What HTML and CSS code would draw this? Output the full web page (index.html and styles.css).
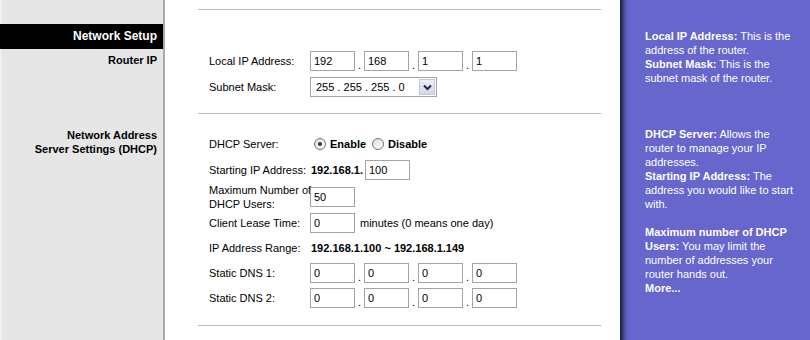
FILE: index.html
```html
<html>
<head>
<title>Setup - Basic Setup</title>
<link rel="stylesheet" href="styles.css">
</head>
<body>

<div class="page">
  <div class="nav">
    <div class="nav-title">Network Setup</div>
    <div class="nav-item router">Router IP</div>
    <div class="nav-item dhcp">Network Address<br>Server Settings (DHCP)</div>
  </div>

  <div class="main">
    <div class="rule"></div>

    <div class="section section-ip">
      <div class="row">
        <label>Local IP Address:</label>
        <input class="box" value="192"><span class="dot">.</span><input class="box" value="168"><span class="dot">.</span><input class="box" value="1"><span class="dot">.</span><input class="box" value="1">
      </div>
      <div class="row gap6">
        <label>Subnet Mask:</label>
        <div class="select">
          <span class="select-text">255 . 255 . 255 . 0</span>
          <span class="select-arrow">
            <svg width="9" height="7" viewBox="0 0 9 7"><path d="M1 1.5 L4.5 5 L8 1.5" fill="none" stroke="#23234f" stroke-width="2"/></svg>
          </span>
        </div>
      </div>
    </div>

    <div class="rule"></div>

    <div class="section section-dhcp">
      <div class="row">
        <label>DHCP Server:</label>
        <span class="radio checked"></span><span class="radio-label">Enable</span>
        <span class="radio"></span><span class="radio-label">Disable</span>
      </div>
      <div class="row gap6">
        <label>Starting IP Address:</label>
        <span class="prefix">192.168.1.</span><input class="box" value="100">
      </div>
      <div class="row gap7">
        <label class="two-line">Maximum Number of<br>DHCP Users:</label>
        <input class="box" value="50">
      </div>
      <div class="row gap6">
        <label>Client Lease Time:</label>
        <input class="box" value="0"><span class="note">minutes (0 means one day)</span>
      </div>
      <div class="row gap5">
        <label>IP Address Range:</label>
        <span class="range">192.168.1.100 ~ 192.168.1.149</span>
      </div>
      <div class="row gap5">
        <label>Static DNS 1:</label>
        <input class="box" value="0"><span class="dot">.</span><input class="box" value="0"><span class="dot">.</span><input class="box" value="0"><span class="dot">.</span><input class="box" value="0">
      </div>
      <div class="row gap5">
        <label>Static DNS 2:</label>
        <input class="box" value="0"><span class="dot">.</span><input class="box" value="0"><span class="dot">.</span><input class="box" value="0"><span class="dot">.</span><input class="box" value="0">
      </div>
    </div>

    <div class="rule"></div>
  </div>

  <div class="help">
    <b>Local IP Address:</b> This is the address of the router.<br>
    <b>Subnet Mask:</b> This is the subnet mask of the router.<br>
    <br><br><br>
    <b>DHCP Server:</b> Allows the router to manage your IP addresses.<br>
    <b>Starting IP Address:</b> The address you would like to start with.<br>
    <br>
    <b>Maximum number of DHCP Users:</b> You may limit the number of addresses your router hands out.<br>
    <b>More...</b><br>
    <br><br><br>
    <b>Time Setting:</b> Choose the time zone you are in.
  </div>
</div>

</body>
</html>
```

FILE: styles.css
```css
body {
  margin: 0;
  font-family: "Liberation Sans", Arial, sans-serif;
  font-size: 11px;
  color: #000;
}

.page {
  display: flex;
  height: 340px;
  overflow: hidden;
}

/* left menu */
.nav {
  width: 163px;
  flex: none;
  padding-top: 24px;
  background: #e6e6e6;
  border-right: 2px solid #a9a9a9;
  box-shadow: inset 2px 0 0 #f1f1f1;
}

.nav-title {
  height: 25px;
  line-height: 25px;
  padding-right: 6px;
  text-align: right;
  background: #000;
  color: #fff;
  font-size: 12px;
  font-weight: bold;
}

.nav-item {
  padding-right: 6px;
  text-align: right;
  font-weight: bold;
  line-height: 14px;
}

.router { margin-top: 4px; }
.dhcp { margin-top: 61px; }

/* form area */
.main {
  width: 455px;
  flex: none;
  box-sizing: border-box;
  padding: 9px 19px 0 33px;
  background: #fff;
}

.rule {
  height: 1px;
  background: #b9b6c9;
}

.section-ip { padding: 41px 0 16px 11px; }
.section-dhcp { padding: 20px 0 17px 11px; }

.row {
  display: flex;
  align-items: center;
  height: 20px;
}

.gap5 { margin-top: 5px; }
.gap6 { margin-top: 6px; }
.gap7 { margin-top: 7px; }

.row label {
  width: 101px;
  flex: none;
  white-space: nowrap;
}

.row label.two-line { line-height: 14px; }

.box {
  width: 45px;
  height: 20px;
  box-sizing: border-box;
  margin: 0;
  padding: 0 3px;
  border: 1px solid #a3a3a3;
  font-family: "Liberation Sans", Arial, sans-serif;
  font-size: 11px;
  color: #000;
  background: #fff;
}

.dot {
  width: 9px;
  align-self: flex-end;
  line-height: 12px;
  text-align: center;
}

.select {
  display: flex;
  align-items: center;
  width: 127px;
  height: 20px;
  box-sizing: border-box;
  border: 1px solid #a3a3a3;
  padding: 1px;
}

.select-text {
  flex: 1;
  padding-left: 4px;
}

.select-arrow {
  display: flex;
  align-items: center;
  justify-content: center;
  width: 16px;
  height: 16px;
  box-sizing: border-box;
  border: 1px solid #c3c6d3;
  background: linear-gradient(#eceef4, #d5d8e2);
}

.radio {
  width: 12px;
  height: 12px;
  box-sizing: border-box;
  margin-left: 4px;
  border: 1px solid #6f7377;
  border-radius: 50%;
  background: linear-gradient(135deg, #dcdcdc, #fff);
  position: relative;
}

.radio.checked::after {
  content: "";
  position: absolute;
  left: 3px;
  top: 3px;
  width: 4px;
  height: 4px;
  border-radius: 50%;
  background: #333;
}

.radio-label {
  margin-left: 4px;
  margin-right: 2px;
  font-weight: bold;
}

.prefix {
  margin: 0 2px 0 1px;
  font-weight: bold;
}

.note { margin-left: 5px; }

.range {
  margin-left: 1px;
  font-weight: bold;
}

/* help panel */
.help {
  width: 190px;
  flex: none;
  box-sizing: border-box;
  padding: 29px 12px 0 25px;
  line-height: 14px;
  color: #fff;
  background: linear-gradient(to right, #1c1c38 0, #3c3c80 3px, #5a5ab8 6px, #6666cc 9px, #6666cc);
}
```
